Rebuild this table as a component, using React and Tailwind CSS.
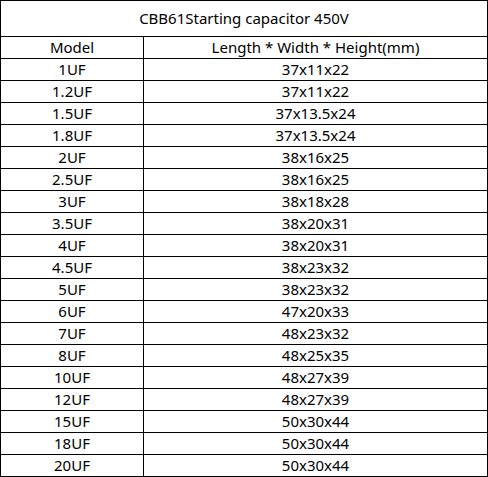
const rows = [
  ['1UF', '37x11x22'],
  ['1.2UF', '37x11x22'],
  ['1.5UF', '37x13.5x24'],
  ['1.8UF', '37x13.5x24'],
  ['2UF', '38x16x25'],
  ['2.5UF', '38x16x25'],
  ['3UF', '38x18x28'],
  ['3.5UF', '38x20x31'],
  ['4UF', '38x20x31'],
  ['4.5UF', '38x23x32'],
  ['5UF', '38x23x32'],
  ['6UF', '47x20x33'],
  ['7UF', '48x23x32'],
  ['8UF', '48x25x35'],
  ['10UF', '48x27x39'],
  ['12UF', '48x27x39'],
  ['15UF', '50x30x44'],
  ['18UF', '50x30x44'],
  ['20UF', '50x30x44'],
];

function Row({ left, right }) {
  return (
    <div className="flex h-[22px]">
      <div className="w-[143px] border-r border-b border-black flex items-center justify-center">{left}</div>
      <div className="flex-1 border-r border-b border-black flex items-center justify-center">{right}</div>
    </div>
  );
}

export default function App() {
  return (
    <div className="w-[488px] h-[477px] bg-white font-['Noto_Sans',sans-serif] text-[15px] leading-none text-black">
      <div className="w-[488px] border-t border-l border-black">
        <div className="h-[36px] border-r border-b border-black flex items-center justify-center">
          CBB61Starting capacitor 450V
        </div>
        <Row left="Model" right="Length * Width * Height(mm)" />
        {rows.map(([model, size]) => (
          <Row key={model} left={model} right={size} />
        ))}
      </div>
    </div>
  );
}
